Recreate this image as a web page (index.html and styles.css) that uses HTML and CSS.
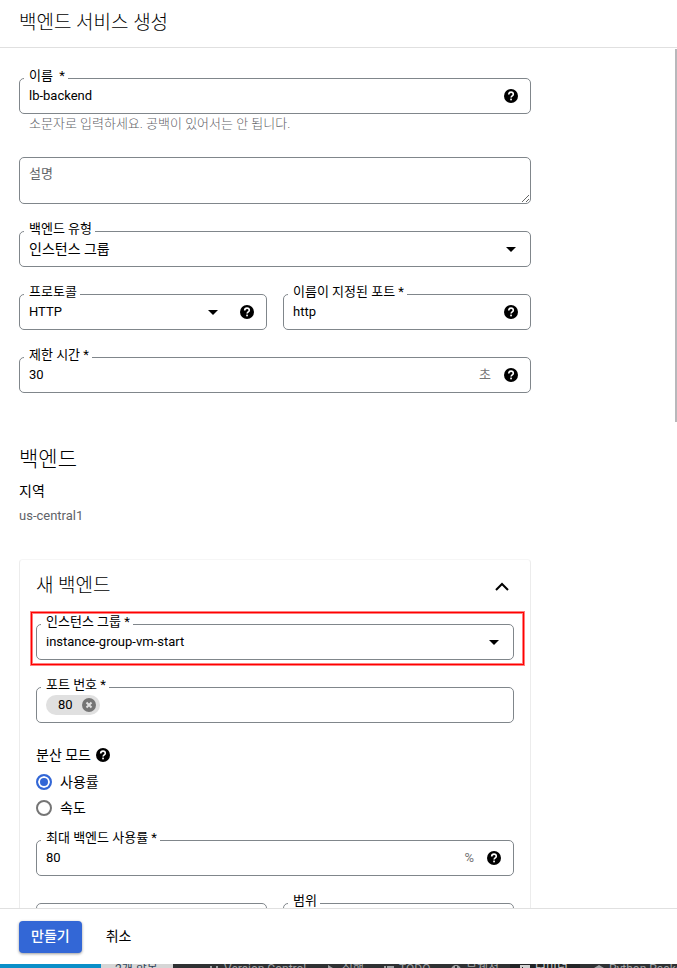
FILE: index.html
```html
<!DOCTYPE html>
<html lang="ko">
<head>
<meta charset="utf-8">
<meta name="viewport" content="width=device-width, initial-scale=1">
<title>백엔드 서비스 생성</title>
<link rel="stylesheet" href="styles.css">
</head>
<body>
<svg class="sprite" aria-hidden="true">
  <symbol id="help" viewBox="0 0 14 14"><circle cx="7" cy="7" r="7" fill="currentColor"/><path d="M4.7 5.4C4.7 4 5.7 3.1 7 3.1s2.3.9 2.3 2.1c0 1.6-2.2 1.7-2.2 3.4" fill="none" stroke="#fff" stroke-width="1.6"/><rect x="6.2" y="9.6" width="1.7" height="1.7" fill="#fff"/></symbol>
  <symbol id="arrow" viewBox="0 0 10 5"><path d="M0 0h10L5 5z" fill="currentColor"/></symbol>
</svg>

<header class="page-header"><h1>백엔드 서비스 생성</h1></header>

<main class="content">
  <form class="form" id="backend-form">
    <div class="field">
      <label for="name">이름 &nbsp;*</label>
      <input id="name" type="text" value="lb-backend">
      <button class="icon" type="button" aria-label="도움말"><svg class="help"><use href="#help"/></svg></button>
    </div>
    <p class="hint">소문자로 입력하세요. 공백이 있어서는 안 됩니다.</p>

    <textarea class="description" aria-label="설명" placeholder="설명"></textarea>

    <div class="field">
      <label for="type">백엔드 유형</label>
      <select id="type"><option>인스턴스 그룹</option></select>
      <svg class="arrow"><use href="#arrow"/></svg>
    </div>

    <div class="row">
      <div class="field">
        <label for="protocol">프로토콜</label>
        <select id="protocol"><option>HTTP</option></select>
        <svg class="arrow"><use href="#arrow"/></svg>
        <button class="icon after-arrow" type="button" aria-label="도움말"><svg class="help"><use href="#help"/></svg></button>
      </div>
      <div class="field">
        <label for="port-name">이름이 지정된 포트 *</label>
        <input id="port-name" type="text" value="http">
        <button class="icon" type="button" aria-label="도움말"><svg class="help"><use href="#help"/></svg></button>
      </div>
    </div>

    <div class="field">
      <label for="timeout">제한 시간 *</label>
      <input id="timeout" type="text" value="30">
      <span class="unit">초</span>
      <button class="icon" type="button" aria-label="도움말"><svg class="help"><use href="#help"/></svg></button>
    </div>

    <h2 class="section-title">백엔드</h2>
    <p class="region-label">지역</p>
    <p class="region-value">us-central1</p>

    <section class="card">
      <div class="card-head">
        <h3>새 백엔드</h3>
        <button class="icon" type="button" aria-label="접기"><svg class="chevron" viewBox="0 0 14 9"><path d="M1 8l6-6 6 6" fill="none" stroke="currentColor" stroke-width="2"/></svg></button>
      </div>

      <div class="field highlighted">
        <label for="group">인스턴스 그룹 *</label>
        <select id="group"><option>instance-group-vm-start</option></select>
        <svg class="arrow"><use href="#arrow"/></svg>
      </div>

      <div class="field">
        <label for="ports">포트 번호 *</label>
        <span class="chip">80
          <button class="icon" type="button" aria-label="80 삭제"><svg class="help" viewBox="0 0 14 14"><circle cx="7" cy="7" r="7" fill="currentColor"/><path d="M4.5 4.5l5 5M9.5 4.5l-5 5" stroke="#e0e0e0" stroke-width="2"/></svg></button>
        </span>
        <input id="ports" type="text">
      </div>

      <div class="mode" id="mode-label">분산 모드
        <button class="icon" type="button" aria-label="도움말"><svg class="help"><use href="#help"/></svg></button>
      </div>
      <div class="modes" role="radiogroup" aria-labelledby="mode-label">
        <label class="radio"><input type="radio" name="mode" checked>사용률</label>
        <label class="radio"><input type="radio" name="mode">속도</label>
      </div>

      <div class="field">
        <label for="max">최대 백엔드 사용률 *</label>
        <input id="max" type="text" value="80">
        <span class="unit">%</span>
        <button class="icon" type="button" aria-label="도움말"><svg class="help"><use href="#help"/></svg></button>
      </div>

      <div class="row">
        <div class="field"><input type="text" aria-label="용량"></div>
        <div class="field">
          <label for="scope">범위</label>
          <select id="scope"><option></option></select>
        </div>
      </div>
    </section>
  </form>
  <div class="scroll-thumb"></div>
</main>

<footer class="actions">
  <button class="create" type="submit" form="backend-form">만들기</button>
  <button class="cancel" type="button">취소</button>
</footer>

<div class="taskbar">
  <span class="task-blue"></span>
  <span class="task-light">2개 항목</span>
  <span class="tool vcs"><svg viewBox="0 0 10 10"><path d="M2 1v8M8 1v3L2 7" fill="none" stroke="currentColor" stroke-width="2"/></svg>Version Control</span>
  <span class="tool run"><svg viewBox="0 0 10 10"><path d="M1 0l8 5-8 5z" fill="currentColor"/></svg>실행</span>
  <span class="tool todo"><svg viewBox="0 0 10 10"><path d="M0 2h2M3 2h7M0 5h2M3 5h7M0 8h2M3 8h7" stroke="currentColor" stroke-width="2"/></svg>TODO</span>
  <span class="tool issues"><svg viewBox="0 0 10 10"><circle cx="5" cy="5" r="5" fill="currentColor"/><path d="M5 1v5" stroke="#2f3133" stroke-width="2"/></svg>문제점</span>
  <span class="tool terminal"><svg viewBox="0 0 10 10"><path d="M0 0h10v10H0z" fill="currentColor"/><path d="M2 2l3 3-3 3" fill="none" stroke="#222"/></svg>터미널</span>
  <span class="tool packages"><svg viewBox="0 0 10 10"><path d="M0 3l5-3 5 3-5 3zM0 6l5 3 5-3" fill="currentColor"/></svg>Python Packages</span>
</div>
</body>
</html>
```
FILE: styles.css
```css
* { box-sizing: border-box; }

body {
  display: flex;
  flex-direction: column;
  height: 100vh;
  margin: 0;
  overflow: hidden;
  background: #fff;
  color: #000;
  font: 13px/20px Roboto, "Noto Sans CJK KR", sans-serif;
}

h1, h2, h3, p { margin: 0; font-weight: 300; }

button, input, select, textarea { font: inherit; color: inherit; }

.sprite { position: absolute; width: 0; height: 0; }

.page-header {
  flex: none;
  padding: 9px 19px 10px;
  border-bottom: 1px solid #e0e0e0;
}

.page-header h1 { font-size: 19px; line-height: 28px; }

.content {
  position: relative;
  flex: 1;
  min-height: 0;
  overflow: hidden;
  padding: 30px 19px 0;
}

.form { max-width: 512px; }

.scroll-thumb {
  position: absolute;
  top: 1px;
  right: 0;
  width: 2px;
  height: 43.4%;
  background: #b8b8bb;
}

.field {
  position: relative;
  display: flex;
  align-items: center;
  height: 36px;
  padding: 0 12px 0 9px;
  border: 1px solid #80868b;
  border-radius: 5px;
}

.field > label {
  position: absolute;
  top: -10px;
  left: 4px;
  padding: 0 3px 0 5px;
  background: #fff;
  line-height: 14px;
  white-space: nowrap;
}

.field input, .field select {
  flex: 1;
  min-width: 0;
  padding: 0;
  border: 0;
  outline: 0;
  background: none;
  appearance: none;
}

#type { font-size: 14px; }

.help { display: block; width: 14px; height: 14px; }

.arrow {
  flex: none;
  width: 10px;
  height: 5px;
  margin-right: 2px;
  pointer-events: none;
}

.icon {
  flex: none;
  padding: 0;
  border: 0;
  background: none;
  cursor: pointer;
}

.after-arrow { margin-left: 20px; }

.unit { margin-right: 13px; color: #757575; }

.hint { height: 43px; padding-left: 10px; color: #5f6368; }

.description {
  display: block;
  width: 100%;
  height: 47px;
  margin-bottom: 27px;
  padding: 6px 9px;
  border: 1px solid #80868b;
  border-radius: 5px;
  outline: 0;
  resize: vertical;
}

.description::placeholder { color: #5f6368; }

.row {
  display: grid;
  grid-template-columns: 1fr 1fr;
  gap: 16px;
  margin: 27px 0;
}

.section-title { margin-top: 52px; font-size: 21px; line-height: 28px; }
.region-label { margin-top: 8px; font-size: 14px; font-weight: 400; }
.region-value { margin-top: 5px; color: #5f6368; font-weight: 400; }

.card {
  margin-top: 33px;
  padding: 12px 16px;
  border: 1px solid #ececec;
  border-top-color: #f6f6f6;
  border-radius: 4px;
}

.card-head {
  display: flex;
  align-items: center;
  justify-content: space-between;
  margin-bottom: 24px;
  padding-right: 5px;
}

.card-head h3 { font-size: 19px; line-height: 28px; }
.chevron { display: block; width: 14px; height: 9px; }

.highlighted { margin-bottom: 27px; }

.highlighted::after {
  content: "";
  position: absolute;
  inset: -13px -11px -6px -6px;
  border: 1px solid #f00;
  box-shadow: 0 0 0 1px #ff000080, inset 0 0 0 1px #ff000080;
  pointer-events: none;
}

.chip {
  display: flex;
  align-items: center;
  gap: 9px;
  height: 20px;
  padding: 0 4px 0 12px;
  border-radius: 10px;
  background: #e0e0e0;
}

.chip .icon { color: #757575; }

.mode {
  display: flex;
  align-items: center;
  gap: 5px;
  margin-top: 22px;
  font-size: 14px;
}

.modes { margin: 4px 0 19px; }

.radio {
  display: flex;
  align-items: center;
  gap: 8px;
  height: 26px;
  font-size: 14px;
}

.radio input {
  width: 16px;
  height: 16px;
  margin: 0;
  border: 2px solid #757575;
  border-radius: 50%;
  appearance: none;
}

.radio input:checked {
  border-color: #3367d6;
  background: #3367d6;
  box-shadow: inset 0 0 0 2px #fff;
}

.actions {
  display: flex;
  flex: none;
  gap: 12px;
  padding: 12px 19px 11px;
  border-top: 1px solid #e0e0e0;
}

.actions button {
  height: 32px;
  padding: 0 12px 2px;
  border: 0;
  border-radius: 4px;
  background: none;
  font-size: 14px;
}

.actions .create {
  background: #3367d6;
  box-shadow: 0 1px 3px #00000066;
  color: #fff;
  font-weight: 500;
}

.taskbar {
  display: flex;
  flex: none;
  height: 4px;
  overflow: hidden;
  background: #2f3133;
  color: #a0a3a5;
  font-size: 12px;
  line-height: 10px;
  white-space: nowrap;
}

.taskbar span { flex: none; height: 10px; }
.taskbar svg { flex: none; width: 10px; height: 10px; margin-top: 1px; }
.tool { display: flex; gap: 5px; }
.task-blue { width: 101px; background: #0a8fc8; }
.task-light { width: 72px; padding-left: 14px; background: #d6d6d6; color: #33475b; }
.vcs { width: 154px; padding-left: 36px; }
.run { width: 57px; }
.todo { width: 67px; }
.issues { width: 59px; }
.terminal { width: 70px; padding-left: 10px; background: #222426; color: #d0d0d0; }
.packages { padding-left: 14px; }
```
